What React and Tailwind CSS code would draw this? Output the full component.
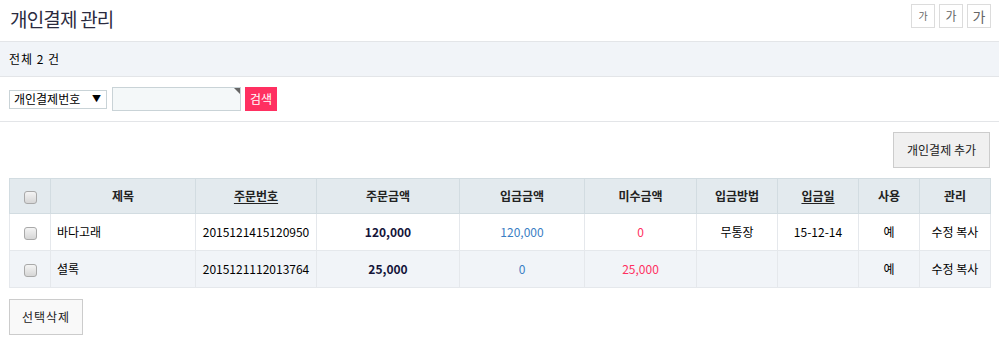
import React from 'react'

const font = { fontFamily: '"Noto Sans CJK KR", "Noto Sans", sans-serif' }

function Check() {
    return (
        <span className="inline-block w-[13px] h-[13px] rounded-[3px] border border-[#a9a9a9] bg-gradient-to-b from-[#f4f4f4] to-[#d6d6d6] align-middle" />
    )
}

const rows = [
    { title: '바다고래', no: '2015121415120950', amount: '120,000', paid: '120,000', due: '0', method: '무통장', date: '15-12-14', use: '예' },
    { title: '셜록', no: '2015121112013764', amount: '25,000', paid: '0', due: '25,000', method: '', date: '', use: '예' },
]

const cols = [
    { label: '', w: 'w-[41px]' },
    { label: '제목', w: 'w-[145px]' },
    { label: '주문번호', w: 'w-[121px]', u: true },
    { label: '주문금액', w: 'w-[143px]' },
    { label: '입금금액', w: 'w-[125px]' },
    { label: '미수금액', w: 'w-[112px]' },
    { label: '입금방법', w: 'w-[81px]' },
    { label: '입금일', w: 'w-[81px]', u: true },
    { label: '사용', w: 'w-[61px]' },
    { label: '관리', w: 'w-[71px]' },
]

export default function App() {
    return (
        <div className="w-[999px] h-[344px] bg-white text-[12px] text-black overflow-hidden" style={font}>
            <div className="flex justify-between items-start h-[41px] pl-[9px] pr-[8px]">
                <h1 className="pl-[1px] pt-[6px] text-[19px] leading-[26px] text-[#2b2b3f] tracking-[-0.8px]">개인결제 관리</h1>
                <div className="flex gap-[4px] pt-[4px]">
                    <button className="w-[24px] h-[24px] border border-[#dcdcdc] bg-white text-[10px] text-[#666] leading-none">가</button>
                    <button className="w-[24px] h-[24px] border border-[#dcdcdc] bg-white text-[12px] text-[#666] leading-none">가</button>
                    <button className="w-[24px] h-[24px] border border-[#dcdcdc] bg-white text-[14px] text-[#666] leading-none">가</button>
                </div>
            </div>

            <div className="h-[36px] border-y border-[#e3e5e8] bg-[#f1f4f8] flex items-center px-[9px] text-[12px] tracking-[1px]">
                전체 2 건
            </div>

            <div className="h-[45px] border-b border-[#e3e5e8] flex items-center px-[9px]">
                <div className="w-[98px] h-[19px] border border-[#c9d3d7] bg-white flex items-center justify-between pl-[4px] pr-[5px] text-[12px]">
                    <span>개인결제번호</span>
                    <span className="text-[9px]">▼</span>
                </div>
                <div className="relative ml-[5px] w-[129px] h-[24px] border border-[#c9d3d7] bg-[#f4f8f9]">
                    <span className="absolute right-[0px] top-[0px] w-0 h-0 border-l-[6px] border-l-transparent border-t-[6px] border-t-[#666]" />
                </div>
                <button className="ml-[4px] w-[32px] h-[24px] bg-[#ff3061] text-white text-[12px]">검색</button>
            </div>

            <div className="flex justify-end px-[9px] pt-[10px]">
                <button className="w-[97px] h-[36px] border border-[#cccccc] bg-[#f0f0f0] text-[12px] text-[#222]">개인결제 추가</button>
            </div>

            <div className="px-[9px] pt-[10px]">
                <table className="w-[981px] border-collapse table-fixed">
                    <thead>
                        <tr className="h-[35px] bg-[#e3eaee]">
                            {cols.map((c, i) => (
                                <th key={i} className={`${c.w} border border-[#d2dce1] font-bold text-[12px] text-[#222] text-center p-0`}>
                                    {i === 0 ? <Check /> : c.u ? <span className="underline underline-offset-2">{c.label}</span> : c.label}
                                </th>
                            ))}
                        </tr>
                    </thead>
                    <tbody>
                        {rows.map((r, i) => (
                            <tr key={i} className={`h-[37px] ${i === 1 ? 'bg-[#f1f4f8]' : 'bg-white'}`}>
                                <td className="border border-[#e5e8ec] text-center p-0"><Check /></td>
                                <td className="border border-[#e5e8ec] text-left pl-[6px]">{r.title}</td>
                                <td className="border border-[#e5e8ec] text-center">{r.no}</td>
                                <td className="border border-[#e5e8ec] text-center font-bold text-[#14143a]">{r.amount}</td>
                                <td className="border border-[#e5e8ec] text-center text-[#3a7ec4]">{r.paid}</td>
                                <td className="border border-[#e5e8ec] text-center text-[#ff3061]">{r.due}</td>
                                <td className="border border-[#e5e8ec] text-center">{r.method}</td>
                                <td className="border border-[#e5e8ec] text-center">{r.date}</td>
                                <td className="border border-[#e5e8ec] text-center">{r.use}</td>
                                <td className="border border-[#e5e8ec] text-center">수정 복사</td>
                            </tr>
                        ))}
                    </tbody>
                </table>
            </div>

            <div className="px-[9px] pt-[11px]">
                <button className="w-[74px] h-[36px] border border-[#cccccc] bg-[#f9f9f9] text-[12px] text-[#222] tracking-[1px]">선택삭제</button>
            </div>
        </div>
    )
}
